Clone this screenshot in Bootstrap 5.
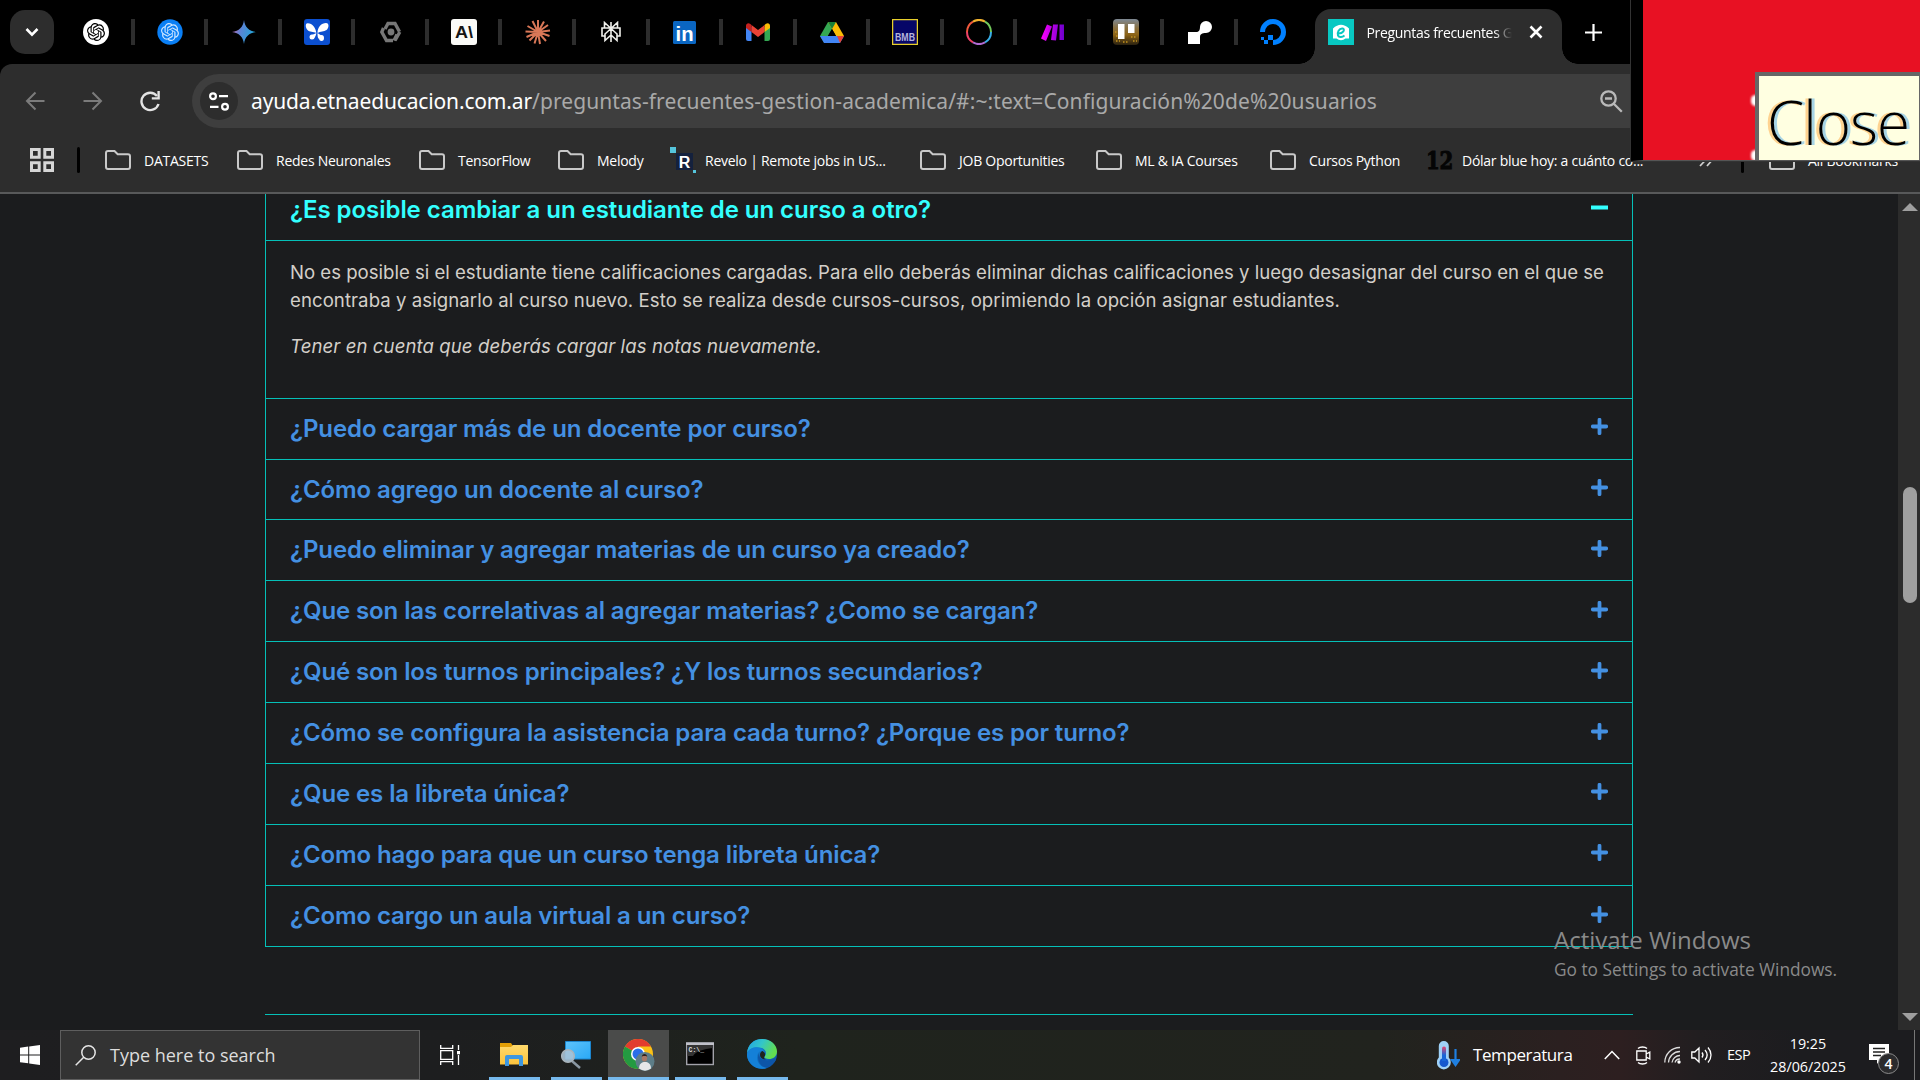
<!DOCTYPE html>
<html lang="es">
<head>
<meta charset="utf-8">
<title>Preguntas frecuentes Gestión Académica</title>
<link href="https://cdn.jsdelivr.net/npm/bootstrap@5.3.0/dist/css/bootstrap.min.css" rel="stylesheet">
<style>
:root{--chrome:#2d2d2d;--teal:#05c0b8;--blue:#4490e2;--ui:"Open Sans","Noto Sans",sans-serif}
html,body{height:100%}
body{background:#1b1c1e;font-family:var(--ui);color:#fff;overflow:hidden;width:1920px;height:1080px}
svg{display:block;flex:none}
.screen{width:1920px;height:1080px}
/* tab strip */
.strip{height:64px;background:#000;padding-left:10px}
.tab-menu{width:44px;height:44px;border-radius:15px;background:var(--chrome);margin-right:7.2px}
.pin{width:73.55px;height:26px;border-right:4px solid var(--chrome);margin-top:-1px;padding-left:1px}
.pin:nth-of-type(18){border-color:transparent}
.pin svg{margin-top:1px}
.active-tab{width:247px;height:55px;margin-top:9px;margin-left:4px;border-radius:16px 16px 0 0;background:var(--chrome);padding:0 19px 9px 13px;position:relative}
.active-tab::before,.active-tab::after{content:"";position:absolute;bottom:0;width:16px;height:16px}
.active-tab::before{left:-16px;background:radial-gradient(circle at 0 0,#000 15.5px,var(--chrome) 16px)}
.active-tab::after{right:-16px;background:radial-gradient(circle at 100% 0,#000 15.5px,var(--chrome) 16px)}
.tab-title{font-size:14px;width:150px;margin-left:12px;letter-spacing:-.32px;-webkit-mask:linear-gradient(90deg,#000 128px,transparent 146px);mask:linear-gradient(90deg,#000 128px,transparent 146px)}
/* toolbar */
.corner{background:#000}
.chrome{background:var(--chrome);border-top-left-radius:12px;height:130px;border-bottom:2px solid #58595a}
.tools{height:74px}
.omni{height:54px;margin-left:31px;border-radius:27px 0 0 27px;background:#3e3e3e;padding-left:8px}
.site-info{width:38px;height:38px;border-radius:50%;background:var(--chrome)}
.url{font-family:"Noto Sans",sans-serif;font-size:21px;margin-left:13px;color:#a9a9a9;letter-spacing:.085px;line-height:54px}
.url b{font-weight:400;color:#fff;letter-spacing:-.15px}
.marks{height:54px;font-size:14px;letter-spacing:-.26px;padding-left:30px;margin-top:-5px}
.bar{width:3px;height:26px;background:#000;border-radius:2px}
.bm span{margin-left:13px}
.bm:nth-of-type(2){width:132px}.bm:nth-of-type(3){width:182px}.bm:nth-of-type(4){width:139px}.bm:nth-of-type(5){width:112px}
.bm:nth-of-type(6){width:250px}.bm:nth-of-type(7){width:176px}.bm:nth-of-type(8){width:174px}.bm:nth-of-type(9){width:156px}.bm:nth-of-type(10){width:273px}
/* magnifier lens */
.lens{left:1631px;top:0;width:289px;height:161px;background:#e81123;border-left:12px solid #000;border-bottom:1px solid #555;outline:1px solid #333;overflow:hidden}
.dot-w{width:9px;height:11px;border-radius:5px;background:#fff;filter:blur(1px);left:108px}
.tip{left:112px;top:72px;width:165px;height:92px;background:#ffffe1;border:4px solid #666;border-right-width:1px;color:#000;font:300 60px/93px "Open Sans",sans-serif;letter-spacing:-1px;padding-left:8px;text-shadow:-3px 0 0 #ffb55a99,3px 0 0 #6bb7e899}
/* page */
.view{height:836px;overflow:hidden}
.faq{width:1368px;margin:-15px 0 0 265px;border:1px solid var(--teal);border-top:0;height:768px}
.q{height:60.875px;border-bottom:1px solid var(--teal);padding:0 24px 0 24px;color:var(--blue);font:600 24px/1.2 Inter,sans-serif;letter-spacing:-.1px}
.q:last-child{border-bottom:0}
.q span{margin-top:1px}
.q svg{margin-top:-4px}
.q.open{color:#3ff;height:62px;letter-spacing:-.05px}
.answer{font:400 18.6px/28px Inter,sans-serif;letter-spacing:-.01px;color:#d3cfc9;height:157.7px;padding:17px 24px 0;border-bottom:1px solid var(--teal)}
.answer p{margin-bottom:18px;white-space:nowrap}
.answer .l2{letter-spacing:.065px}.answer em{letter-spacing:.08px}
.rule{width:1368px;margin:67px 0 0 265px;height:1px;background:var(--teal)}
.sbar{width:22px;background:#2c2c2c;padding:15px 0 14px}
.thumb{width:14px;height:116px;border-radius:7px;background:#9f9f9f;margin-top:276px}
.water{left:1554px;top:926px;color:#8a8a8a;line-height:1.2}
/* taskbar */
.task{height:50px;background:linear-gradient(90deg,#1e1e20 0,#1d1e1f 450px,#1f231d 800px,#21231e 1380px,#2b2020 1560px,#2d1f20 1620px,#211e20 1700px,#1c1c1f 1800px)}
.search{width:360px;height:50px;background:#333;border:1px solid #5e5e5e;color:#ddd;font-size:18px;padding-left:14px}
.app{width:51px;height:50px;border-bottom:3px solid #76b9ed;margin-right:11px}
.app svg{margin-right:2px}
.app.on{width:61px;background:#4a4b4a;margin:0 6px 0 -5px}
.app.on svg{margin:2px 0 0 1px}
.clock{font-size:14.3px;line-height:23px;width:90px}
</style>
</head>
<body>
<svg width="0" height="0" class="position-absolute"><defs>
<symbol id="knot" viewBox="0 0 24 24"><path d="M22.2819 9.8211a5.9847 5.9847 0 0 0-.5157-4.9108 6.0462 6.0462 0 0 0-6.5098-2.9A6.0651 6.0651 0 0 0 4.9807 4.1818a5.9847 5.9847 0 0 0-3.9977 2.9 6.0462 6.0462 0 0 0 .7427 7.0966 5.98 5.98 0 0 0 .511 4.9107 6.051 6.051 0 0 0 6.5146 2.9001A5.9847 5.9847 0 0 0 13.2599 24a6.0557 6.0557 0 0 0 5.7718-4.2058 5.9894 5.9894 0 0 0 3.9977-2.9001 6.0557 6.0557 0 0 0-.7475-7.0729zm-9.022 12.6081a4.4755 4.4755 0 0 1-2.8764-1.0408l.1419-.0804 4.7783-2.7582a.7948.7948 0 0 0 .3927-.6813v-6.7369l2.02 1.1686a.071.071 0 0 1 .038.052v5.5826a4.504 4.504 0 0 1-4.4945 4.4944zm-9.6607-4.1254a4.4708 4.4708 0 0 1-.5346-3.0137l.142.0852 4.783 2.7582a.7712.7712 0 0 0 .7806 0l5.8428-3.3685v2.3324a.0804.0804 0 0 1-.0332.0615L9.74 19.9502a4.4992 4.4992 0 0 1-6.1408-1.6464zM2.3408 7.8956a4.485 4.485 0 0 1 2.3655-1.9728V11.6a.7664.7664 0 0 0 .3879.6765l5.8144 3.3543-2.0201 1.1685a.0757.0757 0 0 1-.071 0l-4.8303-2.7865A4.504 4.504 0 0 1 2.3408 7.872zm16.5963 3.8558L13.1038 8.364 15.1192 7.2a.0757.0757 0 0 1 .071 0l4.8303 2.7913a4.4944 4.4944 0 0 1-.6765 8.1042v-5.6772a.79.79 0 0 0-.407-.667zm2.0107-3.0231l-.142-.0852-4.7735-2.7818a.7759.7759 0 0 0-.7854 0L9.409 9.2297V6.8974a.0662.0662 0 0 1 .0284-.0615l4.8303-2.7866a4.4992 4.4992 0 0 1 6.6802 4.66zM8.3065 12.863l-2.02-1.1638a.0804.0804 0 0 1-.038-.0567V6.0742a4.4992 4.4992 0 0 1 7.3757-3.4537l-.142.0805L8.704 5.459a.7948.7948 0 0 0-.3927.6813zm1.0976-2.3654l2.602-1.4998 2.6069 1.4998v2.9994l-2.5974 1.4997-2.6067-1.4997Z"/></symbol>
<symbol id="folder" viewBox="0 0 26 20"><path d="M3 1h6.5l3.2 3.2H23a2 2 0 0 1 2 2V17a2 2 0 0 1-2 2H3a2 2 0 0 1-2-2V3a2 2 0 0 1 2-2Z" fill="none" stroke="#c9c9c9" stroke-width="2"/></symbol>
<symbol id="plus" viewBox="0 0 17 17"><path d="M8.5 1.8v13.4M1.8 8.5h13.4" stroke="currentColor" stroke-width="3.8" stroke-linecap="round"/></symbol>
<linearGradient id="gem" x1="0" y1="0" x2="1" y2=".3"><stop offset=".1" stop-color="#c06ab0"/><stop offset=".45" stop-color="#5b84d6"/><stop offset="1" stop-color="#22a5d8"/></linearGradient>
<linearGradient id="mk" x1="0" x2="1"><stop offset="0" stop-color="#f0f"/><stop offset="1" stop-color="#6d00cc"/></linearGradient>
<linearGradient id="tr" x1="0" y1="0" x2="0" y2="1"><stop offset="0" stop-color="#7d8894"/><stop offset=".35" stop-color="#8a7040"/><stop offset=".6" stop-color="#8d6417"/><stop offset="1" stop-color="#2a2110"/></linearGradient>
<linearGradient id="ed1" x1="0" y1="0" x2="1" y2=".4"><stop offset="0" stop-color="#1fa0e6"/><stop offset=".5" stop-color="#33c6c9"/><stop offset="1" stop-color="#62dd4f"/></linearGradient>
<linearGradient id="ed2" x1="0" y1="0" x2="1" y2="1"><stop offset="0" stop-color="#1593e0"/><stop offset="1" stop-color="#0c4a9e"/></linearGradient>
<linearGradient id="fo" x1="0" y1="0" x2="0" y2="1"><stop offset="0" stop-color="#ffd96b"/><stop offset="1" stop-color="#fbc33d"/></linearGradient>
<linearGradient id="scr" x1="0" y1="0" x2="1" y2="1"><stop offset="0" stop-color="#5ec3fb"/><stop offset="1" stop-color="#2aa9f7"/></linearGradient>
<linearGradient id="th" x1="0" y1="0" x2="0" y2="1"><stop offset="0" stop-color="#e8436a"/><stop offset=".6" stop-color="#1866d8"/></linearGradient>
</defs></svg>
<div class="screen d-flex flex-column position-relative">
  <header class="strip d-flex align-items-center">
    <div class="tab-menu d-flex align-items-center justify-content-center"><svg width="14" height="10" viewBox="0 0 14 10"><path d="M1.5 2 7 7.6 12.500 2" fill="none" stroke="#fff" stroke-width="2.6"/></svg></div>
    <div class="pin d-flex align-items-center justify-content-center"><svg width="26" height="26" viewBox="0 0 26 26"><circle cx="13" cy="13" r="13" fill="#fff"/><use href="#knot" x="4" y="4" width="18" height="18"/></svg></div>
    <div class="pin d-flex align-items-center justify-content-center"><svg width="26" height="26" viewBox="0 0 26 26"><circle cx="13" cy="13" r="12.700" fill="#0a7ff5"/><use href="#knot" x="4" y="4" width="18" height="18" fill="#cfe6ff"/></svg></div>
    <div class="pin d-flex align-items-center justify-content-center"><svg width="24" height="24" viewBox="0 0 24 24"><path d="M12 0C12.800 7 17 11.200 24 12 17 12.800 12.800 17 12 24 11.200 17 7 12.800 0 12 7 11.200 11.200 7 12 0Z" fill="url(#gem)"/></svg></div>
    <div class="pin d-flex align-items-center justify-content-center"><svg width="26" height="26" viewBox="0 0 26 26"><rect width="26" height="26" rx="3" fill="#0b4fd0"/><g fill="#fff"><path d="M12.300 14C12 9 8 4 3.500 4.300 1 4.500 1.500 9 3.500 11c2 2.200 6 1.500 8.800 3Z"/><path d="M13.500 14c0-6 4-10 8.500-10 3.500 0 3 5 .5 7-2.500 1.800-6 1.200-9 3Z"/><circle cx="8" cy="18" r="2.500"/><path d="M12.400 14 8 16v4c2 0 4-3 4.400-6Z"/><ellipse cx="17.500" cy="19" rx="2.500" ry="3"/><path d="m13.500 14 4.500 3-3 3c-1.500-1-1.500-4-1.500-6Z"/></g></svg></div>
    <div class="pin d-flex align-items-center justify-content-center"><svg width="22" height="22" viewBox="0 0 22 22"><g fill="none" stroke="#777" stroke-width="3.400"><path d="M5 8 8 2.500h7l4.500 8.200"/><path d="M17 13.500 14 19.500M3.500 7 1.800 11 6.500 19.500H13M19.800 11 15 19.500"/></g><circle cx="11" cy="11" r="3.400" fill="#777"/></svg></div>
    <div class="pin d-flex align-items-center justify-content-center"><svg width="26" height="26" viewBox="0 0 26 26"><rect width="26" height="26" rx="3" fill="#fafaf7"/><text x="13" y="19" text-anchor="middle" font-family="Liberation Sans" font-weight="700" font-size="16.500" textLength="18" lengthAdjust="spacingAndGlyphs" fill="#141413">A\</text></svg></div>
    <div class="pin d-flex align-items-center justify-content-center"><svg width="26" height="26" viewBox="-13 -13 26 26"><path d="M0 0V-12M0 0 6-10.500M0 0 10-7M0 0 12-1.500M0 0 11.500 4M0 0 8 9M0 0 2 12M0 0-3.500 11.500M0 0-8.500 8.500M0 0-11.500 5M0 0-12.500-.5M0 0-10.500-6M0 0-5.500-11" stroke="#d97757" stroke-width="2"/></svg></div>
    <div class="pin d-flex align-items-center justify-content-center"><svg width="20" height="22" viewBox="0 0 20 22"><path d="M10 1v20M3.500 1.500 10 7.500l6.500-6V7h-13ZM3.500 7H1v8h2.800M16.500 7H19v8h-2.800M10 7.500 4 13v6.500l6-5.500 6 5.500V13Z" fill="none" stroke="#f0f0ec" stroke-width="1.600"/></svg></div>
    <div class="pin d-flex align-items-center justify-content-center"><svg width="23" height="23" viewBox="0 0 23 23"><rect width="23" height="23" rx="1.500" fill="#0a66c2"/><text x="11.500" y="19.500" text-anchor="middle" font-family="Liberation Sans" font-weight="700" font-size="20" textLength="18" lengthAdjust="spacingAndGlyphs" fill="#fff">in</text></svg></div>
    <div class="pin d-flex align-items-center justify-content-center"><svg width="24" height="18" viewBox="0 0 24 18"><path d="M0 4h5.500v14H2a2 2 0 0 1-2-2Z" fill="#4285f4"/><path d="M18.500 4H24v12a2 2 0 0 1-2 2h-3.500Z" fill="#34a853"/><path d="M18.500 2 20 .8c1.800-1.300 4-.4 4 2V5l-5.500 4Z" fill="#fbbc04"/><path d="M5.500 2 12 7l6.500-5v7L12 14 5.500 9Z" fill="#ea4335"/><path d="M0 5V2.800C0 .4 2.400-.5 4 .8L5.500 2v7Z" fill="#c5221f"/></svg></div>
    <div class="pin d-flex align-items-center justify-content-center"><svg width="24" height="21" viewBox="0 0 24 21"><path d="M8 0h8l-4 7-8 13.500L0 14Z" fill="#34a853"/><path d="M8 0h8l8 14h-8Z" fill="#fbbc04"/><path d="M0 14h24l-4 7H4Z" fill="#4285f4"/><path d="M17 14h7l-4 7Z" fill="#ea4335"/><path d="M8 14 12 7l4 7Z" fill="#000"/><path d="M8 0h8l-4 7Z" fill="#188038"/></svg></div>
    <div class="pin d-flex align-items-center justify-content-center"><svg width="26" height="26" viewBox="0 0 26 26"><rect x=".6" y=".6" width="24.800" height="24.800" fill="#060667" stroke="#e8cf2b" stroke-width="1.300"/><text x="13" y="21.500" text-anchor="middle" font-family="Liberation Sans" font-weight="700" font-size="11" textLength="20" lengthAdjust="spacingAndGlyphs" fill="#b4b4dc">BMB</text></svg></div>
    <div class="pin d-flex align-items-center justify-content-center"><svg width="26" height="26" viewBox="-13 -13 26 26" fill="none" stroke-width="2"><path d="M-12 0A12 12 0 0 1-6-10.400" stroke="#f0583c"/><path d="M-6-10.400A12 12 0 0 1 6-10.400" stroke="#f2b32f"/><path d="M6-10.400A12 12 0 0 1 12 0" stroke="#72c95b"/><path d="M12 0A12 12 0 0 1 6 10.400" stroke="#38aee6"/><path d="M6 10.400A12 12 0 0 1-6 10.400" stroke="#b06ad2"/><path d="M-6 10.400A12 12 0 0 1-12 0" stroke="#ee4268"/></svg></div>
    <div class="pin d-flex align-items-center justify-content-center"><svg width="24" height="17" viewBox="0 0 24 17"><path d="m6 .5 5 2L5 17 0 14.500ZM12 .5h5L15 16.500l-5-.5ZM18.500.5H23V16h-4.500Z" fill="url(#mk)"/></svg></div>
    <div class="pin d-flex align-items-center justify-content-center"><svg width="26" height="26" viewBox="0 0 26 26"><rect width="26" height="26" rx="4" fill="url(#tr)"/><path d="M3 22h4m3 1h5m3-5h5m-3 4h4M2 13h2m-1 4h2" stroke="#c4921f" stroke-width="1.500" stroke-dasharray="1.500 1.500"/><path d="M5 5h6.500v15H5ZM15 5h6.500v9H15Z" fill="#fff"/></svg></div>
    <div class="pin d-flex align-items-center justify-content-center"><svg width="24" height="24" viewBox="0 0 24 24"><path d="M0 12h8c3 0 4-2 4-5a6 6 0 1 1 6 6c-4 0-6 1-6 4v7H0Z" fill="#fff"/></svg></div>
    <div class="pin d-flex align-items-center justify-content-center"><svg width="26" height="26" viewBox="0 0 26 26"><path d="M2.500 13A10.500 10.500 0 1 1 13 23.500" fill="none" stroke="#0080ff" stroke-width="5"/><path d="M8 16h5v5H8ZM4 21h4v4H4ZM1 18h3v3H1Z" fill="#0080ff"/></svg></div>
    <div class="active-tab d-flex align-items-center align-self-start">
      <svg width="26" height="26" viewBox="0 0 26 26"><rect width="26" height="26" fill="#08c8c2"/><path d="M5 9.500Q13 2 21 9.500V19.500H17.500a6.500 6.500 0 0 1-9 0H5Z" fill="#fff"/><path d="M9.500 14.500c6 .5 8-4.500 5-5-3.500-.3-5.500 4-4.500 7 1.200 2.500 4.500 1.500 6.500 0" fill="none" stroke="#08c8c2" stroke-width="2"/></svg>
      <span class="tab-title text-nowrap overflow-hidden">Preguntas frecuentes G</span>
      <svg class="ms-auto" width="14" height="14" viewBox="0 0 14 14"><path d="m1.500 1.500 11 11m0-11-11 11" stroke="#fff" stroke-width="2.600"/></svg>
    </div>
    <svg style="margin-left:23px" width="17" height="17" viewBox="0 0 17 17"><path d="M8.500 0v17M0 8.500h17" stroke="#fff" stroke-width="2.200"/></svg>
  </header>
  <div class="corner"><div class="chrome">
    <div class="tools d-flex align-items-center">
      <svg style="margin-left:25px" width="20" height="20" viewBox="0 0 20 20"><path d="M19.500 10H2M10.500 1.500 2 10l8.500 8.500" fill="none" stroke="#7b7b7b" stroke-width="2"/></svg>
      <svg style="margin-left:38px" width="20" height="20" viewBox="0 0 20 20"><path d="M.5 10H18M9.500 1.500 18 10l-8.500 8.500" fill="none" stroke="#7b7b7b" stroke-width="2"/></svg>
      <svg style="margin-left:37px" width="21" height="21" viewBox="0 0 21 21"><path d="M18.500 13A8.700 8.700 0 1 1 17 5" fill="none" stroke="#e3e3e3" stroke-width="2.400"/><path d="M19.800 0v8.500h-8V6.200h5.600V0Z" fill="#e3e3e3"/></svg>
      <div class="omni d-flex align-items-center flex-grow-1">
        <div class="site-info d-flex align-items-center justify-content-center"><svg width="20" height="19" viewBox="0 0 20 19"><g fill="none" stroke="#fff" stroke-width="2.200"><circle cx="4" cy="4.200" r="2.900"/><path d="M10 4.200h9M1 14.800h8.500"/><circle cx="16" cy="14.800" r="2.900"/></g></svg></div>
        <div class="url text-nowrap"><b>ayuda.etnaeducacion.com.ar</b>/preguntas-frecuentes-gestion-academica/#:~:text=Configuración%20de%20usuarios</div>
        <svg class="ms-auto" style="margin-right:297px" width="23" height="23" viewBox="0 0 23 23"><g fill="none" stroke="#b9b9b9" stroke-width="2.300"><circle cx="8.500" cy="8.500" r="7.200"/><path d="m13.800 13.800 8 8M5 8.500h7"/></g></svg>
      </div>
    </div>
    <div class="marks d-flex align-items-center text-nowrap">
      <svg width="24" height="24" viewBox="0 0 24 24"><path d="M1.500 1.500h7.700v7.700H1.500ZM14.800 1.500h7.700v7.700h-7.700ZM1.500 14.800h7.700v7.700H1.500ZM14.800 14.800h7.700v7.700h-7.700Z" fill="none" stroke="#d6d6d6" stroke-width="3"/></svg>
      <div class="bar" style="margin:0 25px 0 23px"></div>
      <div class="bm d-flex align-items-center"><svg width="26" height="20"><use href="#folder"/></svg><span>DATASETS</span></div>
      <div class="bm d-flex align-items-center"><svg width="26" height="20"><use href="#folder"/></svg><span>Redes Neuronales</span></div>
      <div class="bm d-flex align-items-center"><svg width="26" height="20"><use href="#folder"/></svg><span>TensorFlow</span></div>
      <div class="bm d-flex align-items-center"><svg width="26" height="20"><use href="#folder"/></svg><span>Melody</span></div>
      <div class="bm d-flex align-items-center"><svg width="26" height="26" viewBox="0 0 26 26"><path d="M0 0h6v6H0ZM23 23h3v3h-3Z" fill="#55c5dc"/><rect x="6" y="6" width="17" height="17" fill="#14213d"/><text x="14.500" y="20.500" text-anchor="middle" font-family="Liberation Sans" font-weight="700" font-size="16" fill="#fff">R</text></svg><span style="margin-left:9px">Revelo | Remote jobs in US...</span></div>
      <div class="bm d-flex align-items-center"><svg width="26" height="20"><use href="#folder"/></svg><span>JOB Oportunities</span></div>
      <div class="bm d-flex align-items-center"><svg width="26" height="20"><use href="#folder"/></svg><span>ML &amp; IA Courses</span></div>
      <div class="bm d-flex align-items-center"><svg width="26" height="20"><use href="#folder"/></svg><span>Cursos Python</span></div>
      <div class="bm d-flex align-items-center"><svg width="28" height="24" viewBox="0 0 28 24"><text x="0" y="20.500" font-family="DejaVu Serif" font-weight="700" font-size="24" textLength="27" lengthAdjust="spacingAndGlyphs" fill="#050505" stroke="#050505">12</text></svg><span style="margin-left:8px">Dólar blue hoy: a cuánto co...</span></div>
      <svg width="15" height="14" viewBox="0 0 15 14"><path d="m1 13 7.500-8M8 13l7-8" stroke="#d0d0d0" stroke-width="1.800"/></svg>
      <div class="bar" style="margin:0 25px 0 27px"></div>
      <div class="d-flex align-items-center"><svg width="26" height="20"><use href="#folder"/></svg><span style="margin-left:13px">All Bookmarks</span></div>
    </div>
  </div></div>
  <main class="view d-flex">
    <div class="flex-grow-1">
      <div class="faq">
        <div class="q open d-flex align-items-center justify-content-between"><span>¿Es posible cambiar a un estudiante de un curso a otro?</span><svg width="17" height="17" viewBox="0 0 17 17"><path d="M2 8.500h13" stroke="currentColor" stroke-width="4" stroke-linecap="square"/></svg></div>
        <div class="answer"><p>No es posible si el estudiante tiene calificaciones cargadas. Para ello deberás eliminar dichas calificaciones y luego desasignar del curso en el que se<br><span class="l2">encontraba y asignarlo al curso nuevo. Esto se realiza desde cursos-cursos, oprimiendo la opción asignar estudiantes.</span></p><p><em>Tener en cuenta que deberás cargar las notas nuevamente.</em></p></div>
        <div class="q d-flex align-items-center justify-content-between"><span>¿Puedo cargar más de un docente por curso?</span><svg width="17" height="17"><use href="#plus"/></svg></div>
        <div class="q d-flex align-items-center justify-content-between"><span>¿Cómo agrego un docente al curso?</span><svg width="17" height="17"><use href="#plus"/></svg></div>
        <div class="q d-flex align-items-center justify-content-between"><span>¿Puedo eliminar y agregar materias de un curso ya creado?</span><svg width="17" height="17"><use href="#plus"/></svg></div>
        <div class="q d-flex align-items-center justify-content-between"><span>¿Que son las correlativas al agregar materias? ¿Como se cargan?</span><svg width="17" height="17"><use href="#plus"/></svg></div>
        <div class="q d-flex align-items-center justify-content-between"><span>¿Qué son los turnos principales? ¿Y los turnos secundarios?</span><svg width="17" height="17"><use href="#plus"/></svg></div>
        <div class="q d-flex align-items-center justify-content-between"><span>¿Cómo se configura la asistencia para cada turno? ¿Porque es por turno?</span><svg width="17" height="17"><use href="#plus"/></svg></div>
        <div class="q d-flex align-items-center justify-content-between"><span>¿Que es la libreta única?</span><svg width="17" height="17"><use href="#plus"/></svg></div>
        <div class="q d-flex align-items-center justify-content-between"><span>¿Como hago para que un curso tenga libreta única?</span><svg width="17" height="17"><use href="#plus"/></svg></div>
        <div class="q d-flex align-items-center justify-content-between"><span>¿Como cargo un aula virtual a un curso?</span><svg width="17" height="17"><use href="#plus"/></svg></div>
      </div>
      <div class="rule"></div>
    </div>
    <div class="sbar d-flex flex-column align-items-center ms-auto h-100 ps-0">
      <svg style="margin-left:2px;margin-top:-6px" width="16" height="8" viewBox="0 0 16 8"><path d="M0 8 8 0l8 8Z" fill="#9f9f9f"/></svg>
      <div class="thumb" style="margin-left:2px"></div>
      <svg class="mt-auto" style="margin-left:2px;margin-bottom:-5px" width="16" height="8" viewBox="0 0 16 8"><path d="M0 0h16L8 8Z" fill="#9f9f9f"/></svg>
    </div>
  </main>
  <footer class="task d-flex align-items-center">
    <svg style="margin:0 20px" width="20" height="20" viewBox="0 0 20 20"><path d="M0 2.800 8.200 1.600V9.400H0ZM9.200 1.500 20 0v9.400H9.200ZM0 10.400h8.200v7.900L0 17.200ZM9.200 10.400H20V20L9.200 18.500Z" fill="#fff"/></svg>
    <div class="search d-flex align-items-center"><svg width="21" height="21" viewBox="0 0 21 21"><circle cx="13.500" cy="7.500" r="6.700" fill="none" stroke="#e6e6e6" stroke-width="1.500"/><path d="M8.700 12.300.7 20.300" stroke="#e6e6e6" stroke-width="1.500"/></svg><span style="margin-left:14px">Type here to search</span></div>
    <svg style="margin:0 29px 0 20px" width="20" height="20" viewBox="0 0 20 20"><path d="M.7 0v3.300h12V0M.7 5.700h12v8.600H.7ZM.7 20v-3.300h12V20M18.500 0v5M18.500 10v10" fill="none" stroke="#fff" stroke-width="1.300"/><path d="M17 6h3v3.300h-3Z" fill="#fff"/></svg>
    <div class="app d-flex align-items-center justify-content-center"><svg width="28" height="24" viewBox="0 0 28 24"><path d="M0 1h11l2 3v3H0Z" fill="#e39f05"/><path d="M0 5h11l2-2h15v19.500H0Z" fill="url(#fo)"/><path d="M5 24V15a2 2 0 0 1 2-2h14a2 2 0 0 1 2 2v9h-4v-7H9v7Z" fill="#3e97e0"/></svg></div>
    <div class="app d-flex align-items-center justify-content-center"><svg width="30" height="30" viewBox="0 0 30 30"><path d="M4.500 2.500H29.500V20H4.500Z" fill="url(#scr)" stroke="#1c86cf"/><path d="m11 22 8 7" stroke="#8b98a3" stroke-width="2.500"/><circle cx="7" cy="17" r="6.300" fill="#a8c3d6" fill-opacity=".9" stroke="#aab4bb" stroke-width="1.500"/></svg></div>
    <div class="app on d-flex align-items-center justify-content-center"><svg width="32" height="32" viewBox="0 0 32 32"><circle cx="15" cy="15" r="15" fill="#fbc116"/><path d="M15 15 2 7.500A15 15 0 0 1 28 7.500H15Z" fill="#e33b2e"/><path d="M2 7.500A15 15 0 0 0 15 30l6.500-11.200L15 15Z" fill="#249a41"/><circle cx="15" cy="15" r="7" fill="#fff"/><circle cx="15" cy="15" r="5.500" fill="#2a6fe8"/><circle cx="22" cy="22.500" r="9.500" fill="#5d7d88"/><path d="M16 29.500c0-5 3-6.500 6-6.500s6 1.500 6 6.500a9.500 9.500 0 0 1-12 0Z" fill="#e6e6e8"/><ellipse cx="21.500" cy="19" rx="2.700" ry="3.600" fill="#a77765"/><path d="M18.800 18c0-4 5.400-4 5.400 0l-1-1h-3.400Z" fill="#2c2320"/></svg></div>
    <div class="app d-flex align-items-center justify-content-center"><svg width="28" height="24" viewBox="0 0 28 24"><rect x=".7" y="1" width="26.600" height="21.500" fill="#000" stroke="#a2a2aa" stroke-width="1.400"/><path d="M0 .5h28V3H0Z" fill="#bfc0c9"/><path d="M1.500 3h25v3C18 7 10 9 7 14H1.500Z" fill="#333"/><text x="2.500" y="10" font-family="Liberation Mono" font-weight="700" font-size="6.500" fill="#ddd">C:\_</text></svg></div>
    <div class="app d-flex align-items-center justify-content-center"><svg width="30" height="30" viewBox="0 0 30 30"><circle cx="15" cy="15" r="15" fill="url(#ed2)"/><path d="M0 14C1 5 7 0 15 0c9 0 15 6 15 12.500 0 5-4 7.500-8 7.500-4 0-5.500-1.500-4-3 2-2.500 1-6.500-3-8C9 7 2 8.500 0 14Z" fill="url(#ed1)"/><path d="M12 13c-4 4-2 15 8 16-8 3-19-2-20-13 1-6 7-9 13-7 3 .8 4 3 4.500 4.500-1.500-1.500-4-2-5.500-.5Z" fill="#1480d8"/><path d="M12 14c-1 5 5 10 16 6 2-.5 1 1-.5 3-2 2.500-5 5-7 5.500C13 28 9 20 12 14Z" fill="#0d55a8"/><path d="M15.500 12c2 1 3.500 3.500 2 5.500-1.500 2 1 3 3.500 3-4 .5-8-1-8-4.500 0-2 1-3.500 2.500-4Z" fill="#1f231d"/></svg></div>
    <div class="d-flex align-items-center ms-auto h-100">
      <svg width="23" height="29" viewBox="0 0 23 29"><path d="M1.800 5a5 5 0 0 1 10 0v11.500a7 7 0 1 1-10 0Z" fill="#9fd1f7"/><circle cx="7" cy="21.500" r="4.500" fill="#1558cf"/><path d="M5 7.500a2 2 0 0 1 4 0V20H5Z" fill="url(#th)"/><path d="M18.500 8v14M15 19l3.500 5 3.500-5Z" stroke="#1f7fe0" stroke-width="2.200" fill="#1f7fe0"/></svg>
      <span style="font-size:17px;letter-spacing:-.4px;margin-left:13px;width:131px">Temperatura</span>
      <svg width="16" height="10" viewBox="0 0 16 10"><path d="m.8 9 7.200-7.500L15.200 9" fill="none" stroke="#fff" stroke-width="1.500"/></svg>
      <svg style="margin-left:16px" width="15" height="19" viewBox="0 0 15 19"><path d="M.8 5h9.400v9H.8ZM10.200 8l3.600-2v7l-3.600-2M2 2.500C4 .5 9 .5 11 2.500M2 16.500c2 2 7 2 9 0" fill="none" stroke="#fff" stroke-width="1.300"/></svg>
      <svg style="margin-left:13px" width="18" height="18" viewBox="0 0 18 18"><g fill="none" stroke="#ddd" stroke-width="1.300"><path d="M.8 16.500A15 15 0 0 1 16 1.500M4.500 16.500A11.500 11.500 0 0 1 16 5.500M8 16.500a8 8 0 0 1 8-7M11 16.500a5 5 0 0 1 5-3.500"/></g><circle cx="15" cy="16" r="1.700" fill="#fff"/></svg>
      <svg style="margin-left:9px" width="21" height="18" viewBox="0 0 21 18"><path d="M.8 6h3L8 2v14l-4.200-4h-3ZM11 6.500c1.200 1.500 1.200 3.500 0 5M14 4c2.600 3 2.600 7 0 10M17 1.500c4 4.500 4 10.500 0 15" fill="none" stroke="#fff" stroke-width="1.300"/></svg>
      <span style="font-size:14.500px;letter-spacing:-.5px;margin-left:15px;width:36px">ESP</span>
      <div class="clock text-center">19:25<br>28/06/2025</div>
      <div class="position-relative" style="margin:5px 0 0 16px"><svg width="34" height="34" viewBox="0 0 34 34"><path d="M0 3h20v16h-9l-3 4v-4H0Z" fill="#fff"/><path d="M4 7.500h12M4 11h12M4 14.500h8" stroke="#222" stroke-width="1.300"/><circle cx="19.500" cy="22.500" r="10" fill="#2b2b2d" stroke="#8a8a8a" stroke-width="1"/><text x="19.500" y="27.500" text-anchor="middle" font-family="Open Sans" font-weight="600" font-size="14" fill="#fff">4</text></svg></div>
      <div class="h-100" style="width:1px;background:#777;margin:0 5px 0 11px"></div>
    </div>
  </footer>
  <div class="water position-absolute"><div style="font-size:24px">Activate Windows</div><div style="font-size:17.300px;margin-top:5px">Go to Settings to activate Windows.</div></div>
  <div class="lens position-absolute"><i class="dot-w position-absolute" style="top:95px"></i><i class="dot-w position-absolute" style="top:150px"></i><div class="tip position-absolute">Close</div></div>
</div>
<script src="https://cdn.jsdelivr.net/npm/bootstrap@5.3.0/dist/js/bootstrap.bundle.min.js"></script>
</body>
</html>
